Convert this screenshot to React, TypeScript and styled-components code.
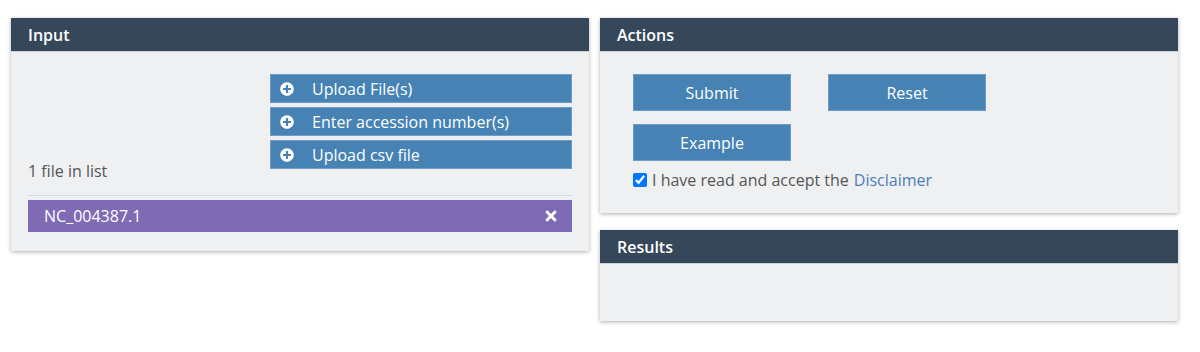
import React from "react";
import styled, { createGlobalStyle } from "styled-components";
import { FaPlusCircle, FaTimes } from "react-icons/fa";

const HEADER_BG = "#364759";
const PANEL_BG = "#eff0f2";
const BLUE = "#4682b4";

const GlobalStyle = createGlobalStyle`
  body {
    margin: 0;
    background: #ffffff;
    font-family: "Open Sans", "Liberation Sans", sans-serif;
    color: #555;
  }
`;

const Page = styled.div`
  display: grid;
  grid-template-columns: 578px 578px;
  column-gap: 11px;
  align-items: start;
  padding: 18px 0 30px 11px;
`;

const Column = styled.div`
  display: flex;
  flex-direction: column;
  gap: 17px;
`;

const Panel = styled.section`
  background: ${PANEL_BG};
  box-shadow: 0 1px 4px rgba(0, 0, 0, 0.32);
`;

const PanelHeader = styled.h3`
  margin: 0;
  height: 34px;
  box-sizing: border-box;
  display: flex;
  align-items: center;
  padding: 0 17px;
  background: ${HEADER_BG};
  border-bottom: 1px solid #c9d1d8;
  color: #ffffff;
  font-size: 16px;
  font-weight: 600;
`;

const InputBody = styled.div`
  padding: 22px 17px 19px;
`;

const TopRow = styled.div`
  display: flex;
  justify-content: space-between;
  align-items: flex-end;
`;

const FileCount = styled.div`
  font-size: 16px;
  line-height: 24px;
  color: #555;
`;

const ButtonStack = styled.div`
  width: 302px;
  display: flex;
  flex-direction: column;
  gap: 4px;
  margin-bottom: 14px;
`;

const AddButton = styled.button`
  height: 29px;
  box-sizing: border-box;
  display: flex;
  align-items: center;
  padding: 0 0 0 9px;
  background: ${BLUE};
  border: 1px solid #6f9cc4;
  color: #ffffff;
  font-family: inherit;
  font-size: 16px;
  text-align: left;
  cursor: pointer;

  svg {
    width: 14px;
    height: 14px;
    margin-right: 18px;
  }
`;

const Divider = styled.hr`
  margin: 12px 0 4px;
  border: 0;
  border-top: 1px solid #d6d8db;
`;

const FileItem = styled.div`
  height: 32px;
  box-sizing: border-box;
  display: flex;
  align-items: center;
  justify-content: space-between;
  padding: 0 15px 0 16px;
  background: #7e6bb4;
  color: #ffffff;
  font-size: 16px;

  svg {
    width: 12px;
    height: 16px;
  }
`;

const ActionsBody = styled.div`
  padding: 22px 17px 22px 33px;
`;

const ActionGrid = styled.div`
  display: grid;
  grid-template-columns: 158px 158px;
  column-gap: 37px;
  row-gap: 13px;
`;

const ActionButton = styled.button`
  height: 37px;
  box-sizing: border-box;
  background: ${BLUE};
  border: 1px solid #6f9cc4;
  color: #ffffff;
  font-family: inherit;
  font-size: 16px;
  cursor: pointer;
`;

const AgreeRow = styled.label`
  display: flex;
  align-items: center;
  margin-top: 8px;
  font-size: 16px;
  line-height: 22px;
  color: #555;

  input {
    width: 14px;
    height: 14px;
    margin: 0 5px 0 0;
  }
`;

const Link = styled.a`
  color: #4a7fb5;
  text-decoration: none;
  margin-left: 5px;
`;

const ResultsBody = styled.div`
  height: 57px;
`;

export default function App() {
  return (
    <>
      <GlobalStyle />
      <Page>
        <Panel>
          <PanelHeader>Input</PanelHeader>
          <InputBody>
            <TopRow>
              <FileCount>1 file in list</FileCount>
              <ButtonStack>
                <AddButton>
                  <FaPlusCircle />
                  Upload File(s)
                </AddButton>
                <AddButton>
                  <FaPlusCircle />
                  Enter accession number(s)
                </AddButton>
                <AddButton>
                  <FaPlusCircle />
                  Upload csv file
                </AddButton>
              </ButtonStack>
            </TopRow>
            <Divider />
            <FileItem>
              NC_004387.1
              <FaTimes />
            </FileItem>
          </InputBody>
        </Panel>
        <Column>
          <Panel>
            <PanelHeader>Actions</PanelHeader>
            <ActionsBody>
              <ActionGrid>
                <ActionButton>Submit</ActionButton>
                <ActionButton>Reset</ActionButton>
                <ActionButton>Example</ActionButton>
              </ActionGrid>
              <AgreeRow>
                <input type="checkbox" defaultChecked />
                I have read and accept the
                <Link href="#">Disclaimer</Link>
              </AgreeRow>
            </ActionsBody>
          </Panel>
          <Panel>
            <PanelHeader>Results</PanelHeader>
            <ResultsBody />
          </Panel>
        </Column>
      </Page>
    </>
  );
}
